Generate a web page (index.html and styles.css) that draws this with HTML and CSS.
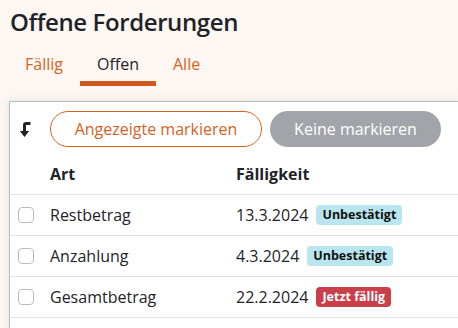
FILE: index.html
```html
<!DOCTYPE html>
<html lang="de">
<head>
  <meta charset="UTF-8" />
  <title>Offene Forderungen</title>
  <link rel="stylesheet" href="styles.css">
</head>
<body>
  <h1 class="page-title">Offene Forderungen</h1>

  <nav class="tabs">
    <a class="tab">Fällig</a>
    <a class="tab active">Offen</a>
    <a class="tab">Alle</a>
  </nav>

  <div class="card">
    <div class="toolbar">
      <svg class="sort-icon" width="12" height="17" viewBox="0 0 12 17">
        <path d="M11.5 2.5 H7 Q5.5 2.5 5.5 4 V11" fill="none" stroke="#1f2328" stroke-width="3"/>
        <path d="M0.8 10 H10.2 L5.5 16 Z" fill="#1f2328"/>
      </svg>
      <button class="btn btn-outline">Angezeigte markieren</button>
      <button class="btn btn-grey">Keine markieren</button>
    </div>

    <div class="row head">
      <div class="col-check"></div>
      <div class="col-art">Art</div>
      <div class="col-date">Fälligkeit</div>
    </div>

    <div class="row">
      <div class="col-check"><span class="checkbox"></span></div>
      <div class="col-art">Restbetrag</div>
      <div class="col-date">13.3.2024 <span class="badge badge-info">Unbestätigt</span></div>
    </div>
    <div class="row">
      <div class="col-check"><span class="checkbox"></span></div>
      <div class="col-art">Anzahlung</div>
      <div class="col-date">4.3.2024 <span class="badge badge-info">Unbestätigt</span></div>
    </div>
    <div class="row">
      <div class="col-check"><span class="checkbox"></span></div>
      <div class="col-art">Gesamtbetrag</div>
      <div class="col-date">22.2.2024 <span class="badge badge-danger">Jetzt fällig</span></div>
    </div>
  </div>
</body>
</html>
```

FILE: styles.css
```css
* {
  box-sizing: border-box;
}

html, body {
  height: 100%;
  overflow: hidden;
}

body {
  margin: 0;
  font-family: 'Open Sans', sans-serif;
  background: #fcf7f2;
  color: #1f2328;
}

.page-title {
  margin: 0;
  padding: 5px 0 0 10px;
  font-size: 24px;
  font-weight: 600;
  line-height: 34px;
  letter-spacing: -0.4px;
}

.tabs {
  display: flex;
  padding: 14px 0 0 8px;
}

.tab {
  padding: 0 17px 6px;
  font-size: 16px;
  line-height: 22px;
  color: #d6621f;
  border-bottom: 5px solid transparent;
}

.tab.active {
  color: #1f2328;
  border-bottom-color: #cf5a1e;
}

.card {
  margin: 15px 0 0 9px;
  background: #fff;
  border-top: 1px solid #b4bcc4;
  border-left: 1px solid #b4bcc4;
  box-shadow: 0 0 8px rgba(120, 100, 80, 0.15);
  height: 240px;
}

.toolbar {
  display: flex;
  align-items: center;
  padding: 9px 0 0 9px;
}

.sort-icon {
  margin-right: 19px;
}

.btn {
  height: 36px;
  border-radius: 18px;
  font-family: inherit;
  font-size: 16px;
  padding: 0;
  cursor: pointer;
}

.btn-outline {
  width: 212px;
  background: #fff;
  border: 1px solid #d6621f;
  color: #d6621f;
  margin-right: 8px;
}

.btn-grey {
  width: 171px;
  background: #a1a5aa;
  border: none;
  color: #fff;
}

.row {
  display: flex;
  align-items: center;
  height: 41px;
  border-bottom: 1px solid #dfe2e6;
  font-size: 16px;
}

.row.head {
  height: 48px;
  font-weight: bold;
  padding-top: 6px;
}

.col-check {
  width: 40px;
  display: flex;
  padding-left: 8px;
}

.col-art {
  width: 186px;
}

.col-date {
  display: flex;
  align-items: center;
  gap: 8px;
}

.checkbox {
  width: 16px;
  height: 16px;
  border: 1px solid #b9bdc2;
  border-radius: 4px;
}

.badge {
  font-size: 12.5px;
  font-weight: bold;
  line-height: 20px;
  padding: 0 6px;
  border-radius: 4px;
}

.badge-info {
  background: #b9e6ee;
  color: #111;
}

.badge-danger {
  background: #c9404b;
  color: #fff;
}
```
